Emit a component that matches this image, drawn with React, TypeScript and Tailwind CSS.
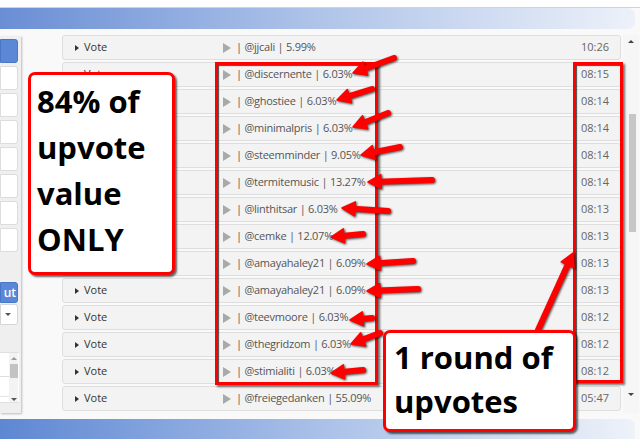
import React from "react";

const rows: [string, string][] = [
  ["@jjcali | 5.99%", "10:26"],
  ["@discernente | 6.03%", "08:15"],
  ["@ghostiee | 6.03%", "08:14"],
  ["@minimalpris | 6.03%", "08:14"],
  ["@steemminder | 9.05%", "08:14"],
  ["@termitemusic | 13.27%", "08:14"],
  ["@linthitsar | 6.03%", "08:13"],
  ["@cemke | 12.07%", "08:13"],
  ["@amayahaley21 | 6.09%", "08:13"],
  ["@amayahaley21 | 6.09%", "08:13"],
  ["@teevmoore | 6.03%", "08:12"],
  ["@thegridzom | 6.03%", "08:12"],
  ["@stimialiti | 6.03%", "08:12"],
  ["@freiegedanken | 55.09%", "05:47"],
];

const arrows: [number, number, number, number][] = [
  [394, 58, 353, 73],
  [372, 89, 337, 100],
  [388, 113, 353, 127],
  [400, 147, 361, 155],
  [432, 180, 368, 182],
  [388, 211, 342, 208],
  [363, 234, 331, 237],
  [413, 261, 367, 264],
  [418, 289, 367, 291],
  [372, 318, 350, 320],
  [380, 333, 351, 344],
  [363, 370, 331, 373],
  [538, 330, 573, 253],
];

function Arrow({ a }: { a: [number, number, number, number] }) {
  const [x1, y1, x2, y2] = a;
  const dx = x2 - x1;
  const dy = y2 - y1;
  const len = Math.sqrt(dx * dx + dy * dy);
  const ux = dx / len;
  const uy = dy / len;
  const hl = 13;
  const hw = 7;
  const bx = x2 - ux * hl;
  const by = y2 - uy * hl;
  const px = -uy;
  const py = ux;
  const pts = `${x2},${y2} ${bx + px * hw},${by + py * hw} ${bx - px * hw},${by - py * hw}`;
  return (
    <g>
      <line x1={x1} y1={y1} x2={bx + ux * 2} y2={by + uy * 2} stroke="#ff0000" strokeWidth={6} strokeLinecap="round" />
      <polygon points={pts} fill="#ff0000" stroke="#ff0000" strokeWidth={1.5} strokeLinejoin="round" />
    </g>
  );
}

function SideItem({ blue }: { blue?: boolean }) {
  return (
    <div
      className={
        blue
          ? "h-[24px] w-[18px] rounded-r-[3px] bg-[#5b87d6] border border-[#4a76c6]"
          : "h-[24px] w-[18px] rounded-r-[3px] bg-white border border-[#dcdcdc]"
      }
    />
  );
}

export default function App() {
  return (
    <div
      className="relative w-[640px] h-[439px] overflow-hidden bg-[#f9f9f9]"
      style={{ fontFamily: '"Open Sans", "Liberation Sans", sans-serif' }}
    >
      <div className="h-[8px] bg-white border-b border-[#d2d2d2]" />
      <div className="h-[21px] w-[635px] rounded-r-[7px] bg-linear-to-r from-[#6a8ed5] via-[#afc4e9] to-[#edf1f9]" />

      <div className="flex h-[384px] pt-[6px]">
        {/* left panel */}
        <div className="mt-[1px] h-[377px] w-[21px] bg-[#efefef] shadow-[1px_1px_2px_rgba(0,0,0,0.25)] flex flex-col">
          <div className="flex flex-col gap-[3px] pt-[3px]">
            <SideItem blue />
            <SideItem />
            <SideItem />
            <SideItem />
            <SideItem />
            <SideItem />
            <SideItem />
            <SideItem />
          </div>
          <div className="mt-[30px] h-[21px] w-[18px] rounded-r-[3px] bg-[#5a87d7] border border-[#4875c6] flex items-center justify-end pr-[1px] text-[12px] font-semibold text-white leading-none">
            ut
          </div>
          <div className="mt-[1px] h-[21px] w-[18px] rounded-r-[3px] bg-white border border-[#d6d6d6] flex items-center pl-[4px]">
            <div className="w-0 h-0 border-x-[3px] border-x-transparent border-t-[3px] border-t-[#555]" />
          </div>
          <div className="mt-[27px] h-[51px] w-[19px] bg-white border-y border-[#e0e0e0] flex">
            <div className="w-[9px] flex flex-col">
              <div className="h-[23px]" />
              <div className="h-[1px] bg-[#dddddd]" />
              <div className="h-[19px]" />
              <div className="h-[1px] bg-[#e6e6e6]" />
            </div>
            <div className="w-[9px] bg-[#f3f3f3] flex flex-col items-center">
              <div className="mt-[4px] w-0 h-0 border-x-[3px] border-x-transparent border-b-[3px] border-b-[#9a9a9a]" />
              <div className="mt-[4px] h-[14px] w-[8px] bg-[#c3c3c3]" />
              <div className="mt-[20px] w-0 h-0 border-x-[3px] border-x-transparent border-t-[3px] border-t-[#555]" />
            </div>
          </div>
        </div>

        {/* list */}
        <div className="ml-[41px] w-[559px] h-[378px] overflow-hidden flex flex-col gap-[2px]">
          {rows.map(([t, time], i) => (
            <div
              key={i}
              className="shrink-0 h-[25px] flex items-center bg-[#f3f3f3] border border-[#dedede] rounded-[3px] text-[11px]"
            >
              <div className="w-[160px] pl-[12px] flex items-center gap-[5px]">
                <div className="w-0 h-0 border-y-[3px] border-y-transparent border-l-[4px] border-l-[#333]" />
                <span className="text-[#333]">Vote</span>
              </div>
              <div className="flex-1 flex items-center">
                <div className="w-0 h-0 border-y-[5px] border-y-transparent border-l-[8px] border-l-[#a9a9a9]" />
                <span className="ml-[5px] text-[#555] tracking-[-0.25px]">{"| " + t}</span>
              </div>
              <div className="pr-[11px] text-[#666]">{time}</div>
            </div>
          ))}
          <div className="shrink-0 h-[25px] bg-[#f3f3f3] border border-[#dedede] rounded-[3px]" />
        </div>

        {/* scrollbar */}
        <div className="ml-[2px] w-[16px] h-[378px] bg-[#f6f6f6] flex flex-col items-center">
          <div className="mt-[5px] w-0 h-0 border-x-[3px] border-x-transparent border-b-[3px] border-b-[#444]" />
          <div className="mt-[71px] ml-[3px] h-[118px] w-[7px] bg-[#c6c6c6]" />
          <div className="mt-[161px] w-0 h-0 border-x-[3px] border-x-transparent border-t-[3px] border-t-[#444]" />
        </div>
      </div>

      <div className="mt-[6px] h-[20px] w-[635px] rounded-tr-[7px] bg-linear-to-r from-[#5e87d3] via-[#a9c0e8] to-[#eef2f9]" />

      {/* annotations */}
      <div className="absolute left-[215px] top-[62px] w-[163px] h-[323px] border-[3px] border-[#ff0000] shadow-[inset_1px_1px_1px_rgba(0,0,0,0.7),2px_2px_2px_rgba(0,0,0,0.55)]" />
      <div className="absolute left-[573px] top-[62px] w-[50px] h-[321px] border-[3px] border-[#ff0000] shadow-[inset_1px_1px_1px_rgba(0,0,0,0.7),2px_2px_2px_rgba(0,0,0,0.55)]" />

      <svg
        className="absolute left-0 top-0 drop-shadow-[1px_1px_1px_rgba(0,0,0,0.7)]"
        width={640}
        height={439}
        viewBox="0 0 640 439"
      >
        {arrows.map((a, i) => (
          <Arrow key={i} a={a} />
        ))}
      </svg>

      <div className="absolute left-[28px] top-[72px] w-[147px] h-[203px] bg-white border-[3px] border-[#ff0000] rounded-[7px] shadow-[2px_2px_2px_rgba(0,0,0,0.6)] pl-[6px] pt-[3px] text-[31px] font-bold leading-[46px] text-black">
        <div>84% of</div>
        <div>upvote</div>
        <div>value</div>
        <div>ONLY</div>
      </div>

      <div className="absolute left-[383px] top-[330px] w-[193px] h-[102px] bg-white border-[3px] border-[#ff0000] rounded-[7px] shadow-[2px_2px_2px_rgba(0,0,0,0.6)] pl-[8px] pt-[2px] text-[31px] font-bold leading-[44px] text-black">
        <div>1 round of</div>
        <div>upvotes</div>
      </div>
    </div>
  );
}
